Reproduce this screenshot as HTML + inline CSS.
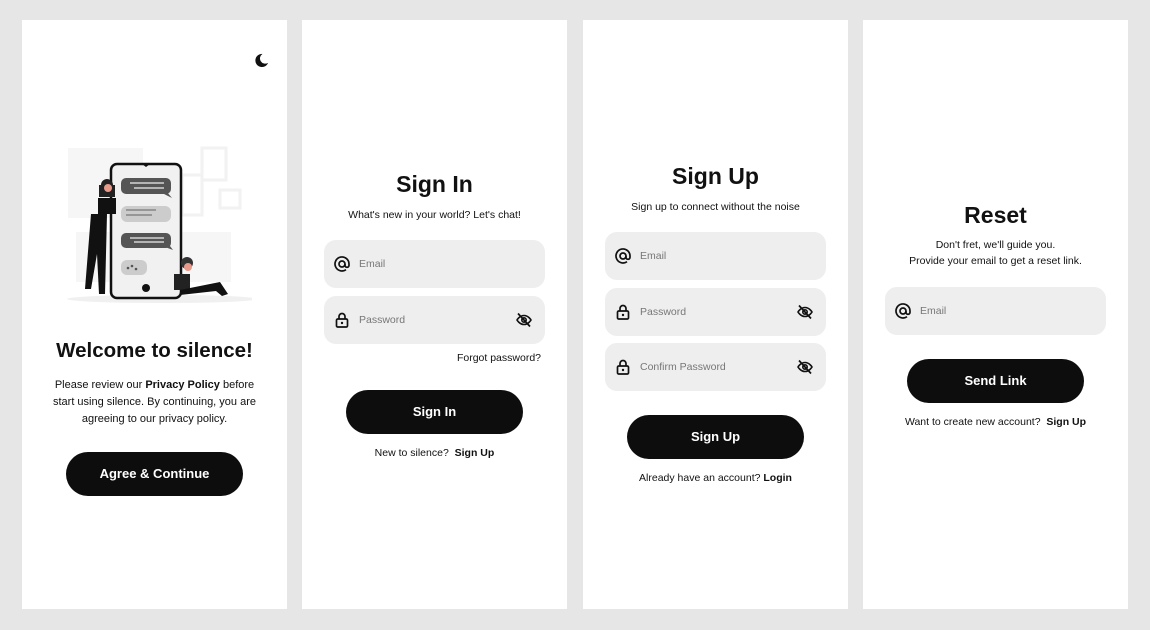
<!DOCTYPE html><html><head><style>
*{margin:0;padding:0;box-sizing:border-box}
body{width:1150px;height:630px;background:#e6e6e6;position:relative;font-family:"Liberation Sans",sans-serif;color:#111;overflow:hidden}
.p{position:absolute;top:20px;width:265px;height:589px;background:#fff}
.a{position:absolute}
.t{position:absolute;left:0;width:265px;text-align:center;font-weight:bold;font-size:23px}
.s{position:absolute;left:0;width:265px;text-align:center;font-size:10.5px;line-height:16px}
.in{position:absolute;left:22px;width:221px;height:48px;background:#eeeeee;border-radius:12px}
.in span{position:absolute;left:35px;top:18px;font-size:10.5px;color:#777}
.ic{position:absolute;left:10px;top:16px}
.eye{position:absolute;right:13px;top:16px}
.b{position:absolute;left:44px;width:177px;height:44px;background:#0d0d0d;border-radius:22px;color:#fff;font-weight:bold;font-size:13px;text-align:center;line-height:44px}
</style></head><body>
<svg width="0" height="0" style="position:absolute"><defs>
<symbol id="at" viewBox="0 0 16 16"><circle cx="8" cy="8" r="3" fill="none" stroke="#111" stroke-width="1.7"/><path d="M11 8v1.3a2 2 0 0 0 4 0V8a7 7 0 1 0-3 5.7" fill="none" stroke="#111" stroke-width="1.7"/></symbol>
<symbol id="lk" viewBox="0 0 16 16"><rect x="2.5" y="7" width="11" height="8" rx="1.3" fill="none" stroke="#111" stroke-width="1.7"/><path d="M5 7V4.5a3 3 0 0 1 6 0V7" fill="none" stroke="#111" stroke-width="1.7"/><circle cx="8" cy="11" r="1.2" fill="#111"/></symbol>
<symbol id="ey" viewBox="0 0 16 16"><path d="M1 8s2.6-4.5 7-4.5S15 8 15 8s-2.6 4.5-7 4.5S1 8 1 8z" fill="none" stroke="#111" stroke-width="1.6"/><circle cx="8" cy="8" r="2.2" fill="none" stroke="#111" stroke-width="1.6"/><path d="M2 1.5l12 13" stroke="#111" stroke-width="1.7"/></symbol>
</defs></svg>

<div class="p" style="left:22px">
<svg class="a" style="left:232px;top:33px" width="15" height="15" viewBox="0 0 16 16"><path d="M9 1a7 7 0 1 0 6 9.5A5.5 5.5 0 0 1 9 1z" fill="#111"/></svg>
<svg class="a" style="left:40px;top:120px" width="190" height="165" viewBox="40 120 190 165">
<rect x="46" y="128" width="75" height="70" fill="#f6f6f6"/><rect x="180" y="128" width="24" height="32" fill="none" stroke="#f2f2f2" stroke-width="3"/><rect x="198" y="170" width="20" height="18" fill="none" stroke="#f2f2f2" stroke-width="3"/><rect x="160" y="155" width="20" height="40" fill="none" stroke="#f2f2f2" stroke-width="3"/><rect x="54" y="212" width="155" height="50" fill="#f6f6f6"/><ellipse cx="140" cy="279" rx="95" ry="4" fill="#f0f0f0"/>
<rect x="89" y="144" width="70" height="134" rx="6" fill="#f1f1f1" stroke="#111" stroke-width="2.5"/><circle cx="124" cy="268" r="4" fill="#111"/><path d="M120 144h8l-4 3z" fill="#111"/>
<rect x="99" y="158" width="50" height="16" rx="5" fill="#555"/><path d="M145 172l5 6-8-4z" fill="#555"/><path d="M108 163h34M112 168h30" stroke="#eee" stroke-width="1.2"/>
<rect x="99" y="186" width="50" height="16" rx="6" fill="#ccc"/><path d="M104 190h30M104 195h26" stroke="#777" stroke-width="1.2"/>
<rect x="99" y="213" width="50" height="15" rx="5" fill="#555"/><path d="M148 226l3 4-8-3z" fill="#555"/><path d="M108 218h34M112 222h30" stroke="#eee" stroke-width="1.2"/>
<rect x="99" y="240" width="26" height="15" rx="6" fill="#ccc"/><circle cx="106" cy="248" r="1.3" fill="#555"/><circle cx="110" cy="246" r="1.3" fill="#555"/><circle cx="114" cy="249" r="1.3" fill="#555"/>
<circle cx="85" cy="165" r="6" fill="#222"/><path d="M77 165h16v12H77z" fill="#222"/><path d="M76 178h18v16H76z" fill="#111"/><path d="M72 200h16l-2 80h-6l-2-40-6 35h-6z" fill="#111" transform="translate(-3 -6)"/><circle cx="86" cy="168" r="4" fill="#e89a8a"/>
<circle cx="165" cy="243" r="6" fill="#333"/><path d="M152 254h16v16h-16z" fill="#222"/><path d="M158 270l40 -8 8 12-6 2-6-5-36 4z" fill="#111"/><circle cx="166" cy="247" r="4" fill="#e89a8a"/>
</svg>
<div class="t" style="top:319px;font-size:20.5px">Welcome to silence!</div>
<div class="a" style="left:23px;top:357px;width:219px;font-size:11px;line-height:17px;text-align:center">Please review our <b>Privacy Policy</b> before start using silence. By continuing, you are agreeing to our privacy policy.</div>
<div class="b" style="top:432px">Agree &amp; Continue</div>
</div>

<div class="p" style="left:302px">
<div class="t" style="top:151px">Sign In</div>
<div class="s" style="top:187px">What's new in your world? Let's chat!</div>
<div class="in" style="top:220px"><svg class="ic" width="16" height="16"><use href="#at"/></svg><span>Email</span></div>
<div class="in" style="top:276px"><svg class="ic" width="16" height="16"><use href="#lk"/></svg><span>Password</span><svg class="eye" width="16" height="16"><use href="#ey"/></svg></div>
<div class="a" style="right:26px;top:332px;font-size:10.5px">Forgot password?</div>
<div class="b" style="top:370px">Sign In</div>
<div class="s" style="top:425px">New to silence?&nbsp; <b>Sign Up</b></div>
</div>

<div class="p" style="left:583px">
<div class="t" style="top:143px">Sign Up</div>
<div class="s" style="top:179px">Sign up to connect without the noise</div>
<div class="in" style="top:212px"><svg class="ic" width="16" height="16"><use href="#at"/></svg><span>Email</span></div>
<div class="in" style="top:268px"><svg class="ic" width="16" height="16"><use href="#lk"/></svg><span>Password</span><svg class="eye" width="16" height="16"><use href="#ey"/></svg></div>
<div class="in" style="top:323px"><svg class="ic" width="16" height="16"><use href="#lk"/></svg><span>Confirm Password</span><svg class="eye" width="16" height="16"><use href="#ey"/></svg></div>
<div class="b" style="top:395px">Sign Up</div>
<div class="s" style="top:450px">Already have an account? <b>Login</b></div>
</div>

<div class="p" style="left:863px">
<div class="t" style="top:182px">Reset</div>
<div class="s" style="top:217px">Don't fret, we'll guide you.<br>Provide your email to get a reset link.</div>
<div class="in" style="top:267px"><svg class="ic" width="16" height="16"><use href="#at"/></svg><span>Email</span></div>
<div class="b" style="top:339px">Send Link</div>
<div class="s" style="top:394px">Want to create new account?&nbsp; <b>Sign Up</b></div>
</div>
</body></html>
